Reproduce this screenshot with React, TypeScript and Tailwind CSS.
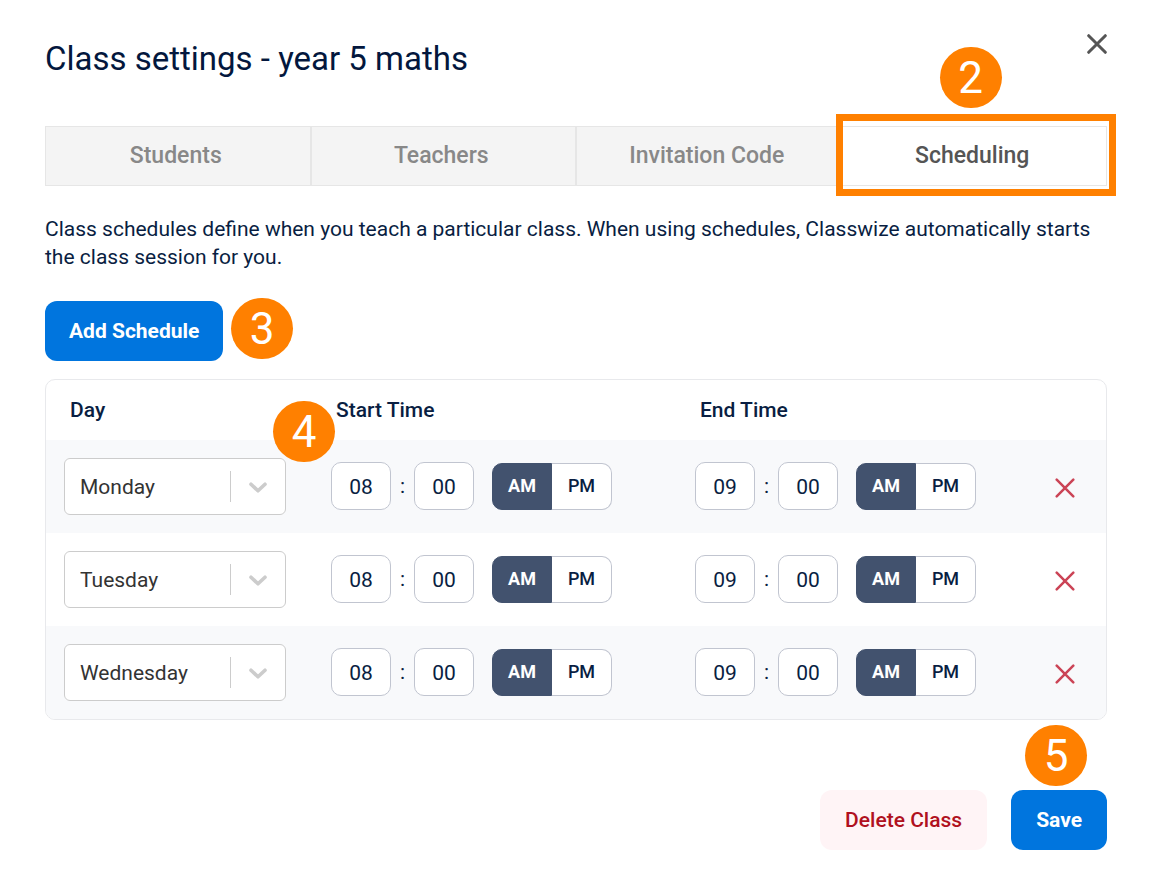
import { useState } from "react";

type Period = "AM" | "PM";

const DAYS = ["Monday", "Tuesday", "Wednesday", "Thursday", "Friday"];

function StepBadge({ step, className }: { step: number; className: string }) {
  return (
    <span
      className={`pointer-events-none absolute z-20 flex h-[61px] w-[62px] items-center justify-center rounded-full bg-[#ff8000] text-[44px] leading-none font-normal text-white ${className}`}
    >
      {step}
    </span>
  );
}

function CrossIcon({ className, strokeWidth }: { className: string; strokeWidth: number }) {
  return (
    <svg viewBox="0 0 20 20" fill="none" stroke="currentColor" strokeWidth={strokeWidth} strokeLinecap="round" className={className} aria-hidden="true">
      <path d="M1.7 1.7 18.3 18.3M18.3 1.7 1.7 18.3" />
    </svg>
  );
}

function DaySelect({ day }: { day: string }) {
  return (
    <div className="relative w-[222px]">
      <select
        aria-label="Day"
        defaultValue={day}
        className="block h-[57px] w-full appearance-none rounded-md border border-[#cccccc] bg-white pt-0.5 pl-[15px] text-[21px] text-[#333333]"
      >
        {DAYS.map((d) => (
          <option key={d}>{d}</option>
        ))}
      </select>
      <div className="pointer-events-none absolute inset-y-0 right-0 flex w-14 items-center justify-center">
        <span className="absolute inset-y-[13px] left-0 w-px bg-[#cccccc]" />
        <svg viewBox="0 0 18 12" className="mt-0.5 h-3 w-[18px]" fill="none" stroke="#cccccc" strokeWidth="3.6" strokeLinecap="round" strokeLinejoin="round" aria-hidden="true">
          <path d="M2 2.2 9 8.8 16 2.2" />
        </svg>
      </div>
    </div>
  );
}

function TimeField({ label, hour }: { label: string; hour: string }) {
  const [period, setPeriod] = useState<Period>("AM");
  const box = "h-12 w-[60px] rounded-[10px] border border-[#c1c5d0] bg-white pt-0.5 text-center text-[21px] text-[#091e42]";
  return (
    <div className="flex items-end pb-px">
      <input aria-label={`${label} hour`} defaultValue={hour} className={box} />
      <span className="w-[23px] text-center text-[21px] leading-12">:</span>
      <input aria-label={`${label} minute`} defaultValue="00" className={box} />
      <div className="ml-[18px] flex h-[47px]" role="group" aria-label={`${label} period`}>
        {(["AM", "PM"] as Period[]).map((p) => (
          <button
            key={p}
            type="button"
            aria-pressed={period === p}
            onClick={() => setPeriod(p)}
            className={
              period === p
                ? "w-[60px] border border-[#42526e] bg-[#42526e] pb-0.5 text-[18px] font-bold text-white first:rounded-l-[10px] last:rounded-r-[10px]"
                : "w-[60px] border border-[#c1c5d0] bg-white pb-0.5 text-[18px] font-medium text-[#091e42] first:rounded-l-[10px] first:border-r-0 last:rounded-r-[10px] last:border-l-0"
            }
          >
            {p}
          </button>
        ))}
      </div>
    </div>
  );
}

export default function App() {
  const tabs = ["Students", "Teachers", "Invitation Code", "Scheduling"];
  const rows = ["Monday", "Tuesday", "Wednesday"];
  return (
    <main className="bg-white pt-8 pr-[43px] pb-10 pl-[45px] font-[Roboto,sans-serif] text-[#091e42]">
      <header className="flex items-start justify-between">
        <h1 className="text-[33px] leading-[54px] font-normal text-[#03173d]">Class settings - year 5 maths</h1>
        <button type="button" aria-label="Close" className="mt-0.5 text-[#555555]">
          <CrossIcon className="h-5 w-5" strokeWidth={3} />
        </button>
      </header>

      <nav className="mt-10 grid grid-cols-4" role="tablist">
        {tabs.map((tab) => {
          const active = tab === "Scheduling";
          return (
            <div key={tab} className="relative">
              <button
                type="button"
                role="tab"
                aria-selected={active}
                className={
                  active
                    ? "h-[60px] w-full border border-[#e6e6e6] bg-white pr-1 text-[23px] font-medium text-[#555555]"
                    : "h-[60px] w-full border border-[#e6e6e6] bg-[#f4f4f4] pr-1 text-[23px] font-medium text-[#888888]"
                }
              >
                {tab}
              </button>
              {active && (
                <>
                  <span className="pointer-events-none absolute -top-3 -right-[9px] -bottom-2.5 -left-1.5 border-7 border-[#ff8000]" />
                  <StepBadge step={2} className="-top-[79px] left-[98px]" />
                </>
              )}
            </div>
          );
        })}
      </nav>

      <p className="mt-[29px] text-[21px] leading-7">
        Class schedules define when you teach a particular class. When using schedules, Classwize automatically starts the class session for you.
      </p>

      <div className="relative mt-[30px] w-fit">
        <button type="button" className="h-[60px] rounded-xl bg-[#0075de] px-6 pt-0.5 text-[21px] font-bold text-white">
          Add Schedule
        </button>
        <StepBadge step={3} className="-top-[3px] left-[186px]" />
      </div>

      <section className="relative mt-[18px]">
        <div className="overflow-hidden rounded-[10px] border border-[#e8e9ec]">
          <table className="w-full table-fixed border-collapse text-left">
            <colgroup>
              <col className="w-[267px]" />
              <col className="w-[364px]" />
              <col />
              <col className="w-[82px]" />
            </colgroup>
            <thead>
              <tr className="h-[60px] text-[21px]">
                <th className="pt-0.5 pl-6 font-medium">Day</th>
                <th className="pt-0.5 pl-[23px] font-medium">Start Time</th>
                <th className="pt-0.5 pl-[23px] font-medium">End Time</th>
                <td />
              </tr>
            </thead>
            <tbody>
              {rows.map((day) => (
                <tr key={day} className="h-[93px] odd:bg-[#f8f9fb]">
                  <td className="pl-[18px]">
                    <DaySelect day={day} />
                  </td>
                  <td className="pl-[18px]">
                    <TimeField label="Start" hour="08" />
                  </td>
                  <td className="pl-[18px]">
                    <TimeField label="End" hour="09" />
                  </td>
                  <td className="pt-0.5">
                    <button type="button" aria-label={`Remove ${day}`} className="mx-auto block text-[#cb4456]">
                      <CrossIcon className="h-5 w-5" strokeWidth={2.5} />
                    </button>
                  </td>
                </tr>
              ))}
            </tbody>
          </table>
        </div>
        <StepBadge step={4} className="top-[22px] left-[228px]" />
      </section>

      <footer className="mt-[70px] flex justify-end gap-6">
        <button type="button" className="h-[60px] rounded-xl bg-[#fff4f6] px-[25px] pt-0.5 text-[21px] font-medium text-[#b01020]">
          Delete Class
        </button>
        <div className="relative">
          <button type="button" className="h-[60px] rounded-xl bg-[#0075de] px-[25px] pt-0.5 text-[21px] font-bold text-white">
            Save
          </button>
          <StepBadge step={5} className="-top-[65px] right-5" />
        </div>
      </footer>
    </main>
  );
}
